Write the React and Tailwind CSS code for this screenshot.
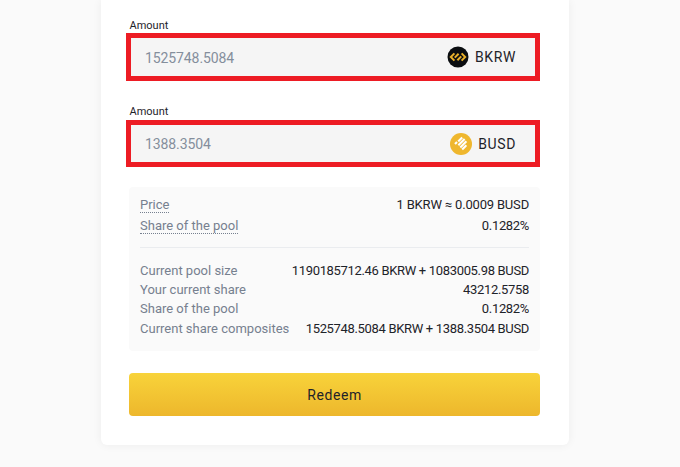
const font = { fontFamily: '"Roboto", "Liberation Sans", sans-serif' };

function BkrwIcon() {
  return (
    <svg width="22" height="22" viewBox="0 0 22 22">
      <circle cx="11" cy="11" r="10.5" fill="#0b0e11" />
      <g fill="none" stroke="#e9b02a" strokeWidth="2">
        <path d="M7.4 7.4 L3.8 11 L7.4 14.6" />
        <path d="M14.6 14.6 L18.2 11 L14.6 7.4" />
        <path d="M7.8 11.6 L11.6 7.8" />
        <path d="M10.4 14.2 L14.2 10.4" />
      </g>
    </svg>
  );
}

function BusdIcon() {
  return (
    <svg width="22" height="22" viewBox="0 0 22 22">
      <circle cx="11" cy="11" r="11" fill="#efb72e" />
      <g stroke="#fff" strokeWidth="2.1">
        <path d="M8.2 8.6 L12.2 4.6" />
        <path d="M8.4 12.2 L14.6 6" />
        <path d="M10.3 14.4 L16.4 8.3" />
        <path d="M12.2 16.4 L16.4 12.2" />
        <path d="M5 11 L7 9" />
      </g>
    </svg>
  );
}

function AmountField({ value, unit, icon, height, labelHeight }) {
  return (
    <div>
      <div className={`text-[11px] text-[#1e2329] pl-[0.5px] ${labelHeight}`}>Amount</div>
      <div className={`-ml-[3px] flex items-center justify-between border-[5px] border-[#ed1c24] bg-[#f5f5f5] pl-[14px] pr-[19px] ${height}`}>
        <span className="pt-px text-sm tracking-[-0.1px] text-[#848e9c]">{value}</span>
        <span className="flex items-center gap-[6px] text-sm font-normal tracking-[0.6px] text-[#1e2329]">
          {icon}
          {unit}
        </span>
      </div>
    </div>
  );
}

function Row({ label, value, dotted, height, tracking = "tracking-[-0.33px]" }) {
  return (
    <div className={`flex items-center justify-between ${height}`}>
      <span className={dotted ? "text-[#76808f] border-b border-dotted border-[#76808f] leading-[15px]" : "text-[#76808f]"}>{label}</span>
      <span className={`text-[#1e2329] ${tracking}`}>{value}</span>
    </div>
  );
}

export default function App() {
  return (
    <div style={font} className="flex min-h-[467px] justify-center overflow-hidden bg-[#fafafa] pr-[10px]">
      <div className="mb-[22px] flex w-[468px] flex-col rounded-b-md bg-white pl-[28px] pr-[29px] pt-[19px] pb-[29px] shadow-[0_0_10px_rgba(0,0,0,0.06)]">
        <AmountField value="1525748.5084" unit="BKRW" icon={<BkrwIcon />} height="h-[48px]" labelHeight="h-[14px] leading-[14px]" />
        <div className="mt-[24px]">
          <AmountField value="1388.3504" unit="BUSD" icon={<BusdIcon />} height="h-[47px]" labelHeight="h-[15px] leading-[14px]" />
        </div>

        <div className="mt-[20px] h-[164px] rounded bg-[#fafafa] px-[11px] pt-[7px] text-[13px]">
          <Row label="Price" value="1 BKRW ≈ 0.0009 BUSD" dotted height="h-[21px]" tracking="tracking-[-0.18px]" />
          <Row label="Share of the pool" value="0.1282%" dotted height="h-[21px]" />
          <div className="mt-[11px] mb-[13px] h-px bg-[#eaecef]" />
          <Row label="Current pool size" value="1190185712.46 BKRW + 1083005.98 BUSD" height="h-[19px]" />
          <Row label="Your current share" value="43212.5758" height="h-[19px]" />
          <Row label="Share of the pool" value="0.1282%" height="h-[19px]" />
          <Row label="Current share composites" value="1525748.5084 BKRW + 1388.3504 BUSD" height="h-[22px]" />
        </div>

        <button className="mt-[22px] h-[43px] rounded bg-gradient-to-b from-[#f8d33a] to-[#edb72c] text-sm font-normal tracking-[0.6px] text-[#1e2329]">
          Redeem
        </button>
      </div>
    </div>
  );
}
